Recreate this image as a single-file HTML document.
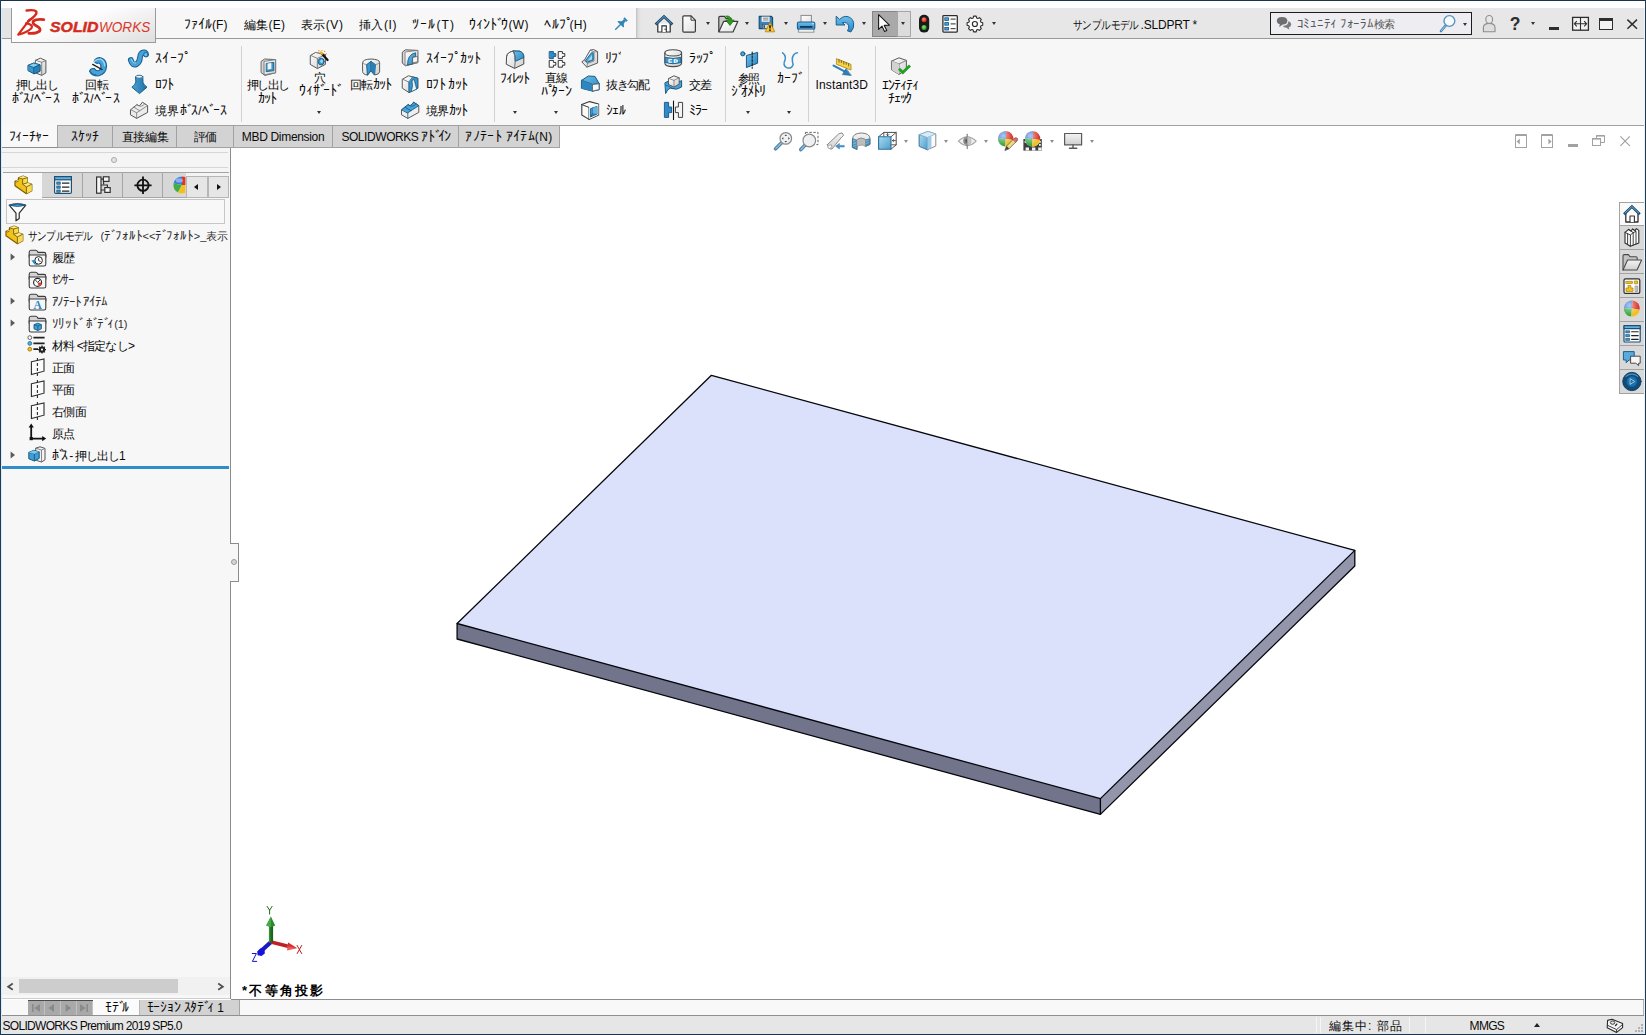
<!DOCTYPE html>
<html lang="ja">
<head>
<meta charset="utf-8">
<title>SOLIDWORKS Premium 2019 - サンプルモデル.SLDPRT</title>
<style>
*{box-sizing:border-box;margin:0;padding:0}
html,body{width:1646px;height:1035px;overflow:hidden;background:#fff}
body{position:relative;font-family:"Liberation Sans",sans-serif;font-size:12px;color:#000}
.a{position:absolute}
.t{position:absolute;white-space:nowrap;overflow:hidden;line-height:16px;height:16px;font-size:12px;color:#0a0a0a}
svg{position:absolute;overflow:visible}
#bt{left:0;top:0;width:1646px;height:1px;background:#1b3348}
#bl{left:0;top:0;width:1px;height:1035px;background:#1d3c55}
#br{left:1645px;top:0;width:1px;height:1035px;background:#1d3c55}
#bb{left:0;top:1034px;width:1646px;height:1px;background:#1b3348}
#bl2{left:1px;top:8px;width:1px;height:1026px;background:#dcebf6}
#br2{left:1644px;top:8px;width:1px;height:1026px;background:#eaf2f9}
#tsl{left:2px;top:8px;width:9px;height:30px;background:#e4e4e4}
#menu{left:156px;top:8px;width:480px;height:30px;background:#f7f7f7}
#tsr{left:636px;top:8px;width:1008px;height:30px;background:linear-gradient(90deg,#bdbdbd 0,#dcdcdc 2px,#e7e7e7 5px,#e7e7e7 100%)}
#tline{left:2px;top:38px;width:1642px;height:1px;background:#999}
#logo{left:11px;top:8px;width:145px;height:35px;border:1px solid #9a9a9a;border-top:none;background:linear-gradient(160deg,#ffffff 0%,#fdfdfd 40%,#ececec 75%,#dedede 100%)}
#ribbon{left:2px;top:39px;width:1642px;height:86px;background:#f7f7f7}
#rline{left:2px;top:125px;width:1642px;height:1px;background:#a0a0a0}
.sep{position:absolute;top:46px;width:1px;height:76px;background:#d2d2d2}
#vp{left:231px;top:126px;width:1413px;height:873px;background:#fff}
#vpb{left:231px;top:999px;width:1413px;height:1px;background:#8c8c8c}
.ct{position:absolute;top:126px;height:22px;background:#d3d3d3;border-right:1px solid #a2a2a2;border-bottom:1px solid #a2a2a2}
#lp{left:2px;top:148px;width:228px;height:851px;background:#f7f7f7}
#lpb{left:230px;top:148px;width:1px;height:851px;background:#8c8c8c}
#lptop{left:2px;top:147px;width:229px;height:1px;background:#8e8e8e}
#btabs{left:2px;top:1000px;width:1642px;height:15px;background:#f8f8f8}
#sline{left:2px;top:1015px;width:1642px;height:1px;background:#909090}
#status{left:2px;top:1016px;width:1642px;height:18px;background:#e6e6e6}
.dd{position:absolute;width:0;height:0;margin-left:0.5px;border-left:2.5px solid transparent;border-right:2.5px solid transparent;border-top:3px solid #333}
.mt{top:173px;height:25px;background:#d7d7d7;border-right:1px solid #a6a6a6;border-bottom:1px solid #a6a6a6}
.dg{border-top-color:#8c8c8c}
.tp{left:1620px;width:25px;height:1px;background:#a2a2a2}
.t b{font-weight:inherit;font-size:1.14em;line-height:1px}.t i{font-style:inherit;margin-right:-0.27em}
</style>
</head>
<body>
<div class="a" id="tsl"></div>
<div class="a" id="menu"></div>
<div class="a" id="tsr"></div>
<div class="a" id="tline"></div>
<div class="a" id="ribbon"></div>
<div class="a" id="rline"></div>
<div class="a" id="vp"></div>
<div class="a" id="lp"></div>
<div class="a" id="lpb"></div>
<div class="a" id="lptop"></div>
<div class="a" id="vpb"></div>
<div class="a" id="btabs"></div>
<div class="a" id="sline"></div>
<div class="a" id="status"></div>
<div class="a" id="logo"></div>
<!-- ===== title bar: logo ===== -->
<svg style="left:0;top:0" width="160" height="44" viewBox="0 0 160 44">
<g fill="none" stroke="#d52b1e" stroke-linecap="round" stroke-linejoin="round">
<path d="M26.6 10.6 Q34.6 9.2 36.4 11.8 Q37.4 14.6 28.2 21.2" stroke-width="2.5"/>
<path d="M29.6 19.6 L18.2 34.6 Q27 32.6 31.4 28.2 Q33.6 24.4 26 23.4" stroke-width="2.2"/>
<path d="M43.8 19.6 Q36.4 18.8 33.4 21 Q31.6 23.4 36.6 26 Q41.4 28.4 39.6 31.2 Q36.4 33.8 28.8 33.4" stroke-width="2.8"/>
</g>
</svg>
<div class="t" style="left:49.6px;top:17.8px;height:18px;line-height:18px;font-size:14.6px;font-weight:bold;font-style:italic;color:#d52b1e;letter-spacing:0;transform:scaleX(1.085);transform-origin:0 0;overflow:visible;-webkit-text-stroke:0.45px #d52b1e">SOLID</div>
<div class="t" style="left:98.6px;top:17.8px;height:18px;line-height:18px;font-size:14.6px;font-style:italic;color:#d9382b;letter-spacing:0;transform:scaleX(0.93);transform-origin:0 0;overflow:visible">WORKS</div>
<!-- pin -->
<svg style="left:613px;top:16px" width="16" height="16" viewBox="613 16 16 16">
<g transform="translate(620.7 24.3) rotate(45) scale(0.94)" fill="#2d86b6">
<rect x="-2.4" y="-8.2" width="4.8" height="1.8"/><rect x="-1.5" y="-6.6" width="3" height="4.2"/>
<path d="M-1.5 -3 L-4.4 -0.6 L-4.4 0.4 L4.4 0.4 L4.4 -0.6 L1.5 -3Z"/>
<rect x="-0.7" y="0" width="1.4" height="8.2"/>
</g></svg>
<!-- ===== quick access toolbar ===== -->
<svg style="left:650px;top:8px" width="350" height="30" viewBox="650 8 350 30">
<defs>
<linearGradient id="gdoc" x1="0" y1="0" x2="1" y2="1"><stop offset="0" stop-color="#ffffff"/><stop offset="1" stop-color="#e2e2e2"/></linearGradient>
<linearGradient id="gpr" x1="0" y1="0" x2="0" y2="1"><stop offset="0" stop-color="#6cc0ee"/><stop offset="1" stop-color="#2a86c6"/></linearGradient>
<radialGradient id="gred" cx="0.4" cy="0.35" r="0.7"><stop offset="0" stop-color="#ff8a7a"/><stop offset="1" stop-color="#d01a10"/></radialGradient>
<radialGradient id="ggrn" cx="0.4" cy="0.35" r="0.7"><stop offset="0" stop-color="#8ae070"/><stop offset="1" stop-color="#1c9418"/></radialGradient>
</defs>
<!-- home -->
<path d="M657.8 23.6 V32 H670.2 V23.6" fill="#fff" stroke="#2a2a2a" stroke-width="1.2"/>
<path d="M661.9 32 V25.9 H666.3 V32" fill="#fff" stroke="#2a2a2a" stroke-width="1.1"/><rect x="664.6" y="28.6" width="1" height="1.4" fill="#2a2a2a"/>
<path d="M655.6 24.6 L664 16.6 L672.4 24.6" fill="none" stroke="#1b4668" stroke-width="2.8" stroke-linejoin="miter" stroke-linecap="butt"/>
<path d="M656.4 23.8 L664 16.5 L671.6 23.8" fill="none" stroke="#6fb8e8" stroke-width="0.9" stroke-linejoin="miter" stroke-linecap="butt"/>
<!-- new doc -->
<path d="M684 15.8 H691 L695.4 20.2 V31 Q695.4 32.2 694.2 32.2 H684 Q682.8 32.2 682.8 31 V17 Q682.8 15.8 684 15.8Z" fill="url(#gdoc)" stroke="#3a3a3a" stroke-width="1.2"/>
<path d="M691 15.8 V20.2 H695.4" fill="none" stroke="#3a3a3a" stroke-width="1"/>
<!-- open -->
<path d="M718.8 32 V17.6 Q718.8 16.4 720 16.4 H724.6 L726 18.4 H731 V21" fill="#c9c9c9" stroke="#3a3a3a" stroke-width="1.2" stroke-linejoin="round"/>
<path d="M718.8 32 L723.6 21.4 H737.8 L733 32Z" fill="url(#gdoc)" stroke="#3a3a3a" stroke-width="1.2" stroke-linejoin="round"/>
<path d="M725.8 16 Q730.6 15.4 731.4 20 L734.2 20 L730 25.4 L725.6 20 L728.4 20 Q728.2 17.6 725.8 16Z" fill="#2f9a1e" stroke="#1c6c10" stroke-width="0.7"/>
<!-- save -->
<path d="M759.2 16.4 H771.4 L772.6 17.6 V28.6 H759.2Z" fill="#3a7fb6" stroke="#164a74" stroke-width="1.1" stroke-linejoin="round"/>
<rect x="761.6" y="16.6" width="8" height="5.2" fill="#f2f2f2"/><path d="M763 18.2H768.4M763 20H768.4" stroke="#555" stroke-width="0.7"/>
<rect x="762.4" y="24.4" width="6.4" height="4.2" fill="#d8d8d8" stroke="#164a74" stroke-width="0.6"/><rect x="763.4" y="25.2" width="1.6" height="2.6" fill="#444"/>
<path d="M770 22.4 L774.8 31.8 H765.2Z" fill="#f8c83a" stroke="#c08a10" stroke-width="0.9" stroke-linejoin="round"/>
<path d="M770 25.2 V28.6" stroke="#111" stroke-width="1.5"/><circle cx="770" cy="30.2" r="0.85" fill="#111"/>
<!-- print -->
<rect x="801" y="15.4" width="10.4" height="8" fill="url(#gdoc)" stroke="#8a8a8a" stroke-width="1"/>
<rect x="797.4" y="22" width="17.4" height="7.6" rx="1.6" fill="url(#gpr)" stroke="#1c5e8e" stroke-width="1.1"/>
<rect x="800" y="26" width="12.4" height="1.8" fill="#123a5a"/>
<path d="M799 29.6 H813.4 L814.2 32.2 H798.2Z" fill="#fbfbfb" stroke="#8a8a8a" stroke-width="0.9"/>
<circle cx="813" cy="23.8" r="0.7" fill="#fff"/>
<!-- undo -->
<path d="M836.2 16.2 L836.2 25 L845 25 L842.4 22.6 Q847.2 21.8 848.6 25.6 Q849.4 28.6 847.4 30.8 L850.8 32 Q854.8 27.6 853.6 22.4 Q851.6 16.2 845.2 16.4 Q842 16.8 839.6 19.4Z" fill="url(#gpr)" stroke="#1c5e8e" stroke-width="1" stroke-linejoin="round"/>
<!-- select (pressed) -->
<rect x="872.5" y="11.5" width="25" height="25" fill="#a9a9a9" stroke="#868686" stroke-width="1"/>
<rect x="897.5" y="11.5" width="13" height="25" fill="#dcdcdc" stroke="#a6a6a6" stroke-width="1"/>
<path d="M878.6 14.6 V29.4 L882 26.2 L884.6 31.6 L886.8 30.6 L884.2 25.4 L889.4 25.2Z" fill="#fff" stroke="#1a1a1a" stroke-width="1.1" stroke-linejoin="round"/>
<!-- traffic light -->
<rect x="919" y="14.8" width="10.2" height="17.8" rx="5" fill="#1a1a1a"/>
<circle cx="924.1" cy="19.8" r="2.5" fill="url(#gred)"/>
<circle cx="924.1" cy="27.6" r="2.5" fill="url(#ggrn)"/>
<!-- options list -->
<rect x="942.9" y="15.7" width="14.4" height="16.4" rx="0.8" fill="#fdfdfd" stroke="#2c2c2c" stroke-width="1.3"/>
<g fill="#4aa6dc" stroke="#15527c" stroke-width="0.8"><rect x="944.8" y="17.8" width="3.8" height="2.6"/><rect x="944.8" y="22.6" width="3.8" height="2.6"/><rect x="944.8" y="27.4" width="3.8" height="2.6"/></g>
<path d="M950.6 19.1H955.6M950.6 23.9H955.6M950.6 28.7H955.6" stroke="#2c2c2c" stroke-width="1"/>
<!-- gear -->
<path d="M973.4 16.2 h3 l0.5 2 l1.5 0.7 l1.8 -1 l2.1 2.1 l-1 1.8 l0.7 1.5 l2 0.5 v3 l-2 0.5 l-0.7 1.5 l1 1.8 l-2.1 2.1 l-1.8 -1 l-1.5 0.7 l-0.5 2 h-3 l-0.5 -2 l-1.5 -0.7 l-1.8 1 l-2.1 -2.1 l1 -1.8 l-0.7 -1.5 l-2 -0.5 v-3 l2 -0.5 l0.7 -1.5 l-1 -1.8 l2.1 -2.1 l1.8 1 l1.5 -0.7Z" transform="translate(974.9 24) scale(0.86) translate(-974.9 -25.3)" fill="#fbfbfb" stroke="#2c2c2c" stroke-width="1.3" stroke-linejoin="round"/>
<circle cx="974.9" cy="24" r="2.5" fill="#fff" stroke="#2c2c2c" stroke-width="1.2"/>
</svg>
<div class="dd" style="left:705.6px;top:22px"></div>
<div class="dd" style="left:744.4px;top:22px"></div>
<div class="dd" style="left:783.6px;top:22px"></div>
<div class="dd" style="left:822.5px;top:22px"></div>
<div class="dd" style="left:861.6px;top:22px"></div>
<div class="dd" style="left:900.5px;top:22px"></div>
<div class="dd" style="left:991.5px;top:22px"></div>
<!-- ===== search box + window controls ===== -->
<div class="a" style="left:1270px;top:12px;width:202px;height:23px;background:#eeeef2;border:1px solid #1c1c1c"></div>
<svg style="left:1276px;top:16px" width="16" height="15" viewBox="0 0 16 15">
<path d="M6 1 Q11.4 1 11.4 4.8 Q11.4 8.4 6.8 8.6 L3.2 11 L3.8 8.2 Q0.8 7.4 0.8 4.8 Q0.8 1 6 1Z" fill="#6e6e6e"/>
<path d="M12.4 5.2 Q15.2 5.8 15.2 8.6 Q15.2 10.8 12.8 11.4 L13.4 13.8 L10.4 11.8 Q7.6 11.8 6.8 10 Q12.2 9.6 12.4 5.2Z" fill="#7c7c7c"/>
</svg>
<svg style="left:1439px;top:14px" width="18" height="19" viewBox="0 0 18 19">
<path d="M6.6 11.6 L2 17" stroke="#4d86b4" stroke-width="2.6" stroke-linecap="round"/>
<path d="M6.6 11.6 L2.4 16.6" stroke="#a8cce8" stroke-width="1" stroke-linecap="round"/>
<circle cx="10.4" cy="7" r="5.4" fill="#f6fafd" stroke="#5a92c0" stroke-width="1.4"/>
</svg>
<div class="dd" style="left:1462.4px;top:23px"></div>
<svg style="left:1482px;top:14px" width="15" height="19" viewBox="0 0 15 19">
<path d="M1.4 17.8 V13.6 Q1.4 9.4 7.2 9.4 Q13 9.4 13 13.6 V17.8Z" fill="#dedede" stroke="#8c8c8c" stroke-width="1.1" stroke-linejoin="round"/>
<ellipse cx="7.2" cy="5.4" rx="3.4" ry="3.9" fill="#e8e8e8" stroke="#8c8c8c" stroke-width="1.1"/>
</svg>
<div class="t" style="left:1509px;top:13px;width:12px;height:22px;line-height:22px;font-size:17.5px;font-weight:bold;color:#2e2e2e;text-align:center">?</div>
<div class="dd" style="left:1530.5px;top:22px"></div>
<div class="a" style="left:1549px;top:27px;width:10px;height:3px;background:#2e2e2e"></div>
<svg style="left:1571px;top:16px" width="19" height="16" viewBox="0 0 19 16">
<rect x="1.6" y="1.4" width="15.8" height="12.8" fill="#f2f2f2" stroke="#2e2e2e" stroke-width="1.3"/>
<path d="M9.5 1.4V14.2" stroke="#2e2e2e" stroke-width="1.1"/>
<path d="M3.4 7.8H15.6M5.8 5.2L3.4 7.8L5.8 10.4M13.2 5.2L15.6 7.8L13.2 10.4" stroke="#2e2e2e" stroke-width="1.1" fill="none"/>
</svg>
<div class="a" style="left:1599px;top:18px;width:14px;height:12px;border:1px solid #2e2e2e;border-top:3px solid #2e2e2e;background:#f2f2f2"></div>
<svg style="left:1626px;top:18px" width="13" height="13" viewBox="0 0 13 13"><path d="M1.4 1.6 L11 10.8 M11 1.6 L1.4 10.8" stroke="#2e2e2e" stroke-width="1.5"/></svg>

<!-- ===== ribbon (CommandManager) ===== -->
<div class="sep" style="left:241px"></div>
<div class="sep" style="left:494px"></div>
<div class="sep" style="left:725px"></div>
<div class="sep" style="left:808px"></div>
<div class="sep" style="left:875px"></div>
<svg style="left:0;top:40px" width="1000" height="85" viewBox="0 40 1000 85">
<defs>
<linearGradient id="gw" x1="0" y1="0" x2="1" y2="1"><stop offset="0" stop-color="#ffffff"/><stop offset="1" stop-color="#cfcfcf"/></linearGradient>
<linearGradient id="gb" x1="0" y1="0" x2="1" y2="1"><stop offset="0" stop-color="#6fbfea"/><stop offset="1" stop-color="#2b84bd"/></linearGradient>
<linearGradient id="gb2" x1="0" y1="0" x2="1" y2="0"><stop offset="0" stop-color="#4aa4da"/><stop offset="1" stop-color="#1f6f9f"/></linearGradient>
</defs>
<g stroke-linejoin="round" stroke-linecap="round">
<!-- extrude boss/base (28,58) -->
<g transform="translate(28 58)">
<path d="M7.7 2.2 L12.4 0.2 L17.9 2.6 L17.9 14.9 L13.7 17.4 L7.7 14.9Z" fill="url(#gw)" stroke="#5a5a5a" stroke-width="1"/>
<path d="M7.7 2.2 L13.7 4.3 L17.9 2.6 M13.7 4.3 V17.4" fill="none" stroke="#7a7a7a" stroke-width="0.9"/>
<path d="M0.3 7.3 L5.6 5.1 L12 6.8 L12 13.2 L6 15.8 L0.3 12.8Z" fill="#3a96cc" stroke="#145a84" stroke-width="1"/>
<path d="M0.3 7.3 L5.6 5.1 L12 6.8 L6 9.4Z" fill="#86cdf0" stroke="#145a84" stroke-width="0.8"/>
<path d="M6 9.4 L12 6.8 L12 13.2 L6 15.8Z" fill="#2a80b6" stroke="#145a84" stroke-width="0.8"/>
</g>
<!-- revolve boss/base (88,56) -->
<g transform="translate(88 56)">
<path d="M6.2 5.4 Q7 2.2 11.4 1.6 Q18.4 2.4 18.6 10 Q18.2 18.4 10 20 Q3.4 19.6 1.6 15.2 Q2.6 11.8 6.4 12.6 Q8.4 15.6 11.2 14.4 Q13.6 12.4 12.8 9.2 Q11.4 6.2 9.2 7.4 Q7.6 7.2 6.2 5.4Z" fill="#48a2d8" stroke="#1b6292" stroke-width="1.1"/>
<path d="M6.6 5.2 Q9 2.6 12.6 3.2 Q16.6 5 16.6 9.6" fill="none" stroke="#9ad6f4" stroke-width="1.4"/>
<path d="M1.8 15 Q3.8 18.6 8 18.8" fill="none" stroke="#1f6f9f" stroke-width="1.2"/>
<path d="M4.7 8.4 L14 13.5" stroke="#1a1a1a" stroke-width="1.3"/>
</g>
<!-- sweep (129,49) -->
<path d="M130.8 60 Q132.4 65.8 136.4 64.2 Q139.6 62.4 140 57.4 Q140.6 52 144 52.4 Q145.8 52.8 146 54.4" fill="none" stroke="#1b6292" stroke-width="5.8"/>
<path d="M130.8 60 Q132.4 65.8 136.4 64.2 Q139.6 62.4 140 57.4 Q140.6 52 144 52.4 Q145.8 52.8 146 54.4" fill="none" stroke="#48a2d8" stroke-width="3.8"/>
<path d="M131.4 59.4 Q132.6 63.6 135.6 63" fill="none" stroke="#9ad6f4" stroke-width="1"/>
<circle cx="145.9" cy="54.6" r="2.2" fill="#6dbbe6" stroke="#1b6292" stroke-width="0.9"/>
<!-- loft (131,75) -->
<path d="M135.8 76.6 Q139.3 74.2 142.8 76.6 L143 82.4 Q143.6 85 147 87.2 L139.5 93.6 L131.9 87.2 Q135.2 85 135.8 82.4Z" fill="url(#gb2)" stroke="#1b5f8e" stroke-width="1"/>
<ellipse cx="139.3" cy="76.7" rx="3.5" ry="1.5" fill="#f4f4f4" stroke="#1b5f8e" stroke-width="0.8"/>
<!-- boundary boss (130,101) -->
<path d="M130.8 109.6 L137 104.6 Q139.4 107.4 142.4 102.2 L147.6 105.6 L147.6 112.4 L136.6 118.4 L130.8 115Z" fill="#ececec" stroke="#555" stroke-width="1"/>
<path d="M130.8 109.6 L136.6 112.8 L147.6 105.6 M136.6 112.8 V118.4 M133.8 107.2 L139.6 110.6 M137 104.6 Q141 108.6 144.8 103.8" fill="none" stroke="#777" stroke-width="0.8"/>
<!-- extrude cut (261,58) -->
<g transform="translate(261 58)">
<path d="M0.4 3.2 L3.6 1 L14.6 1.6 L14.6 14.8 L4 17.4 L0.4 14.8Z" fill="#d4d4d4" stroke="#666" stroke-width="1"/>
<path d="M3.4 3.4 L14.6 1.6 L14.6 14.8 L3.4 16.8Z" fill="url(#gw)" stroke="#777" stroke-width="0.9"/>
<path d="M5.6 5.4 L12.8 4.4 L12.8 12.6 L5.6 13.6Z" fill="#3a96cc" stroke="#145a84" stroke-width="0.9"/>
<path d="M6.6 5.6 L10.4 5.1 L10.4 11 L6.6 11.6Z" fill="#eef6fb"/>
</g>
<!-- hole wizard (310,50) -->
<g transform="translate(310 50)">
<path d="M0.6 5.4 L5.6 2.4 L15.4 4.6 L15.4 14.4 L7.4 18.6 L0.6 14.6Z" fill="url(#gw)" stroke="#5a5a5a" stroke-width="1"/>
<path d="M0.6 5.4 L7.4 8.4 L15.4 4.6 M7.4 8.4 V18.6" fill="none" stroke="#777" stroke-width="0.9"/>
<ellipse cx="11.2" cy="11.6" rx="3" ry="3.4" fill="#3a96cc" stroke="#145a84" stroke-width="0.9"/>
<ellipse cx="11.6" cy="11.2" rx="1.4" ry="1.7" fill="#9ad6f4"/>
<path d="M11.4 3.2 L17.6 10" stroke="#111" stroke-width="2.2"/>
<path d="M10.6 2.4 L12 3.8" stroke="#f0b820" stroke-width="2.2"/>
<g fill="#f08a18"><circle cx="6.8" cy="2.6" r="0.7"/><circle cx="8.8" cy="0.8" r="0.7"/><circle cx="14.6" cy="1.4" r="0.7"/><circle cx="16.4" cy="3.8" r="0.6"/><circle cx="12" cy="0.6" r="0.6"/></g>
</g>
<!-- revolve cut (362,58) -->
<g transform="translate(362 58)">
<path d="M0.6 4.4 Q0.6 1.4 9 1 Q17.6 1.4 17.6 4.4 L17.6 13.8 Q17.6 16.4 12.6 17 L9 13 L5.4 17 Q0.6 16.4 0.6 13.8Z" fill="url(#gw)" stroke="#5a5a5a" stroke-width="1"/>
<path d="M5.4 17 L4.6 6.6 L9 3.4 L13.4 6.6 L12.6 17 L9 13Z" fill="#3a96cc" stroke="#145a84" stroke-width="0.9"/>
<path d="M9 3.4 V13" stroke="#145a84" stroke-width="0.9"/>
<path d="M9 3.4 L13.4 6.6 L12.6 17 L9 13Z" fill="#2a80b6"/>
<path d="M0.6 4.4 Q2 6.6 4.6 6.6 M17.6 4.4 Q16 6.6 13.4 6.6" fill="none" stroke="#777" stroke-width="0.8"/>
</g>
<!-- sweep cut (402,49) -->
<g transform="translate(402 49)">
<path d="M0.6 3 L3.4 0.8 L15.8 1.4 L15.8 13.6 L3.6 16.8 L0.6 14.4Z" fill="#d8d8d8" stroke="#5a5a5a" stroke-width="1"/>
<path d="M3.4 3 L15.8 1.4 L15.8 13.6 L3.4 16.4Z" fill="url(#gw)" stroke="#777" stroke-width="0.8"/>
<path d="M5.6 15.6 Q5.4 5.4 13.6 3.8 L13.6 7.6 L10.8 8.2 L10.8 14.4Z" fill="url(#gb)" stroke="#145a84" stroke-width="0.9"/>
<path d="M11 8.4 L15.6 7.4 L15.6 12.8 L11 13.8Z" fill="#f4f4f4" stroke="#666" stroke-width="0.8"/>
</g>
<!-- loft cut (402,75) -->
<g transform="translate(402 75)">
<path d="M0.6 4.2 L6.4 0.8 L15.8 3.2 L15.8 13.2 L7 17.6 L0.6 13.4Z" fill="url(#gw)" stroke="#5a5a5a" stroke-width="1"/>
<path d="M0.6 4.2 L7 7.2 V17.6" fill="none" stroke="#777" stroke-width="0.9"/>
<path d="M7 7.2 L7 17.6 L9.4 16.4 Q11.4 11 10 5.6 L12.2 4.6 Q13.2 9.6 14.6 13.8 L15.8 13.2 L15.8 3.2 L11 2Z" fill="#3a96cc" stroke="#145a84" stroke-width="0.8"/>
<path d="M9.4 16.4 Q11.4 11 10 5.6 L12.2 4.6 Q13.2 9.6 14.6 13.8Z" fill="#eaf4fa" stroke="#145a84" stroke-width="0.7"/>
</g>
<!-- boundary cut (401,101) -->
<g transform="translate(401 101)">
<path d="M0.8 8.6 L7.2 3.6 Q9.6 6.2 12.6 1.2 L17.8 4.6 L17.8 11.4 L6.8 17.4 L0.8 14Z" fill="#eeeeee" stroke="#5a5a5a" stroke-width="1"/>
<path d="M0.8 8.6 L7.2 3.6 Q9.6 6.2 12.6 1.2 L17.8 4.6 L6.8 11.8Z" fill="#48a2d8" stroke="#145a84" stroke-width="0.9"/>
<path d="M3.8 6.2 L9.8 9.6 M7.2 3.6 Q11.2 7.6 15 2.8 M6.8 11.8 V17.4" fill="none" stroke="#145a84" stroke-width="0.8"/>
</g>
<!-- fillet (506,50) -->
<g transform="translate(506 50)">
<path d="M0.6 6.4 Q1 2.2 7.4 1 L14 1.2 Q18 3 17.8 7.6 L17.8 14 L8.6 18.4 L0.6 14.4Z" fill="url(#gw)" stroke="#4a4a4a" stroke-width="1"/>
<path d="M7.4 1 L14 1.2 Q18 3 17.8 7.6 L9.2 11.4 Q9.6 5.4 7.4 1Z" fill="url(#gb)" stroke="#145a84" stroke-width="0.9"/>
<path d="M0.6 6.4 Q1 2.2 7.4 1 Q9.6 5.4 9.2 11.4 L8.6 18.4" fill="none" stroke="#666" stroke-width="0.9"/>
</g>
<!-- linear pattern (549,51) -->
<g transform="translate(549 51)" stroke-width="1">
<path d="M0.6 0.6 H4.4 V2.6 H6.8 V5.4 H4.4 V7.4 H0.6Z" fill="#2f8bcb" stroke="#1b5f8e"/>
<path d="M9.6 0.6 H13.4 V2.6 H15.8 V5.4 H13.4 V7.4 H9.6Z" fill="#fbfbfb" stroke="#333"/>
<path d="M0.6 9.4 H4.4 V11.4 H6.8 V14.2 H4.4 V16.2 H0.6Z" fill="#fbfbfb" stroke="#333"/>
<path d="M9.6 9.4 H13.4 V11.4 H15.8 V14.2 H13.4 V16.2 H9.6Z" fill="#fbfbfb" stroke="#333"/>
</g>
<!-- rib (581,49) -->
<g transform="translate(581 49)">
<path d="M9.6 1 L12.8 0.6 L16.6 2.6 L16.6 14 L5.8 18.2 L0.8 12.8 L3 11.4Z" fill="url(#gw)" stroke="#5a5a5a" stroke-width="1"/>
<path d="M3 11.4 L6.6 14.4 L13 12 L13 3 L9.6 1 M13 3 L16.6 2.6 M6.6 14.4 L5.8 18.2" fill="none" stroke="#777" stroke-width="0.8"/>
<path d="M4.6 11.4 L10.8 3.4 L12.2 4.2 L12.2 11 L7 13.2Z" fill="#48a2d8" stroke="#145a84" stroke-width="0.9"/>
<path d="M6.8 11.6 L11 6 L11 10.4Z" fill="#a6daf4"/>
</g>
<!-- draft (581,75) -->
<g transform="translate(581 75)">
<path d="M0.8 5.2 L7.4 1 L14 1.4 L18.2 8.6 L18.2 14.8 L11.6 16.2 L0.8 13.4Z" fill="url(#gb)" stroke="#145a84" stroke-width="1"/>
<path d="M0.8 5.2 L11.6 9.4 L18.2 8.6 M11.6 9.4 V16.2" fill="none" stroke="#145a84" stroke-width="0.9"/>
<path d="M0.8 5.2 L11.6 9.4 L11.6 16.2 L0.8 13.4Z" fill="#2f86be"/>
<path d="M11.8 9.6 L18 8.8 L18 14.6 L11.8 16Z" fill="#f6f6f6" stroke="#666" stroke-width="0.8"/>
</g>
<!-- shell (581,101) -->
<g transform="translate(581 101)">
<path d="M0.8 3.6 L8.6 0.6 L17.6 3 L17.6 14 L8 18.4 L0.8 14Z" fill="#fcfcfc" stroke="#3a3a3a" stroke-width="1.1"/>
<path d="M0.8 3.6 L8 6.4 V18.4" fill="none" stroke="#3a3a3a" stroke-width="1"/>
<path d="M8.2 6.4 L17.4 3.2 L17.4 13.8 L8.2 18Z" fill="#fcfcfc"/>
<path d="M9.8 7.6 L16 5.4 L16 13 L9.8 15.8Z" fill="#3a96cc" stroke="#145a84" stroke-width="0.9"/>
<path d="M11.6 7 L11.6 12.6 L16 13 M11.6 12.6 L9.8 15.8" fill="none" stroke="#145a84" stroke-width="0.8"/>
<path d="M11.6 7 L16 5.4 L16 13 L11.6 12.6Z" fill="#62b4e2"/>
</g>
<!-- wrap (664,49) -->
<g transform="translate(664 49)">
<path d="M0.8 4 Q0.8 0.8 9 0.8 Q17.6 0.8 17.6 4 L17.6 14 Q17.6 17.6 9 17.6 Q0.8 17.6 0.8 14Z" fill="url(#gw)" stroke="#4a4a4a" stroke-width="1.1"/>
<path d="M0.8 4 Q0.8 7 9 7 Q17.6 7 17.6 4" fill="none" stroke="#4a4a4a" stroke-width="1"/>
<path d="M1.6 8.4 Q9 10.6 16.8 8.4 L16.8 13.6 Q9 16 1.6 13.6Z" fill="#3a96cc" stroke="#145a84" stroke-width="0.9"/>
<path d="M7.6 10.6 H5 V13.2 H7.6 M10.4 10.6 V13.4 Q13.4 13.2 13.4 12 Q13.4 10.6 10.4 10.6Z" fill="none" stroke="#eaf6fc" stroke-width="1.3"/>
</g>
<!-- intersect (664,75) -->
<g transform="translate(664 75)">
<path d="M1.2 7.6 Q4.4 5 8.2 7.4 Q12.4 9.4 17.6 5.6 L17.6 12 Q12.4 15.6 8 13.4 Q4.8 12 1.8 18.2Z" fill="#48a2d8" stroke="#145a84" stroke-width="1"/>
<path d="M4.8 3.4 L10 0.8 L15.2 2.8 L15.2 9.2 L10 12 L4.8 9.6Z" fill="url(#gw)" stroke="#5a5a5a" stroke-width="1"/>
<path d="M4.8 3.4 L10 5.4 L15.2 2.8 M10 5.4 V12" fill="none" stroke="#777" stroke-width="0.8"/>
<path d="M1.4 10 Q5 10.8 8 13.4" fill="none" stroke="#145a84" stroke-width="0.8"/>
</g>
<!-- mirror (664,101) -->
<g transform="translate(664 101)">
<path d="M0.8 1.4 H4.6 V6 H7.6 V11.6 H4.6 V16.4 H0.8Z" fill="#2f8bcb" stroke="#1b5f8e" stroke-width="1"/>
<path d="M18.2 1.4 H14.4 V6 H11.4 V11.6 H14.4 V16.4 H18.2Z" fill="#f4f4f4" stroke="#444" stroke-width="1"/>
<path d="M9.5 0 V18.4" stroke="#111" stroke-width="1.1"/>
</g>
<!-- ref geometry (740,51) -->
<g transform="translate(740 51)">
<path d="M6.8 4.4 L17.6 1.4 L17.6 12.2 L6.8 16.4Z" fill="url(#gb)" stroke="#145a84" stroke-width="1"/>
<path d="M12.2 1 V17.4" stroke="#111" stroke-width="1" stroke-dasharray="2.4 1.4"/>
<circle cx="2.8" cy="2.8" r="2.1" fill="#48a2d8" stroke="#145a84" stroke-width="1"/>
</g>
<!-- curves (780,51) -->
<path d="M782.6 52.8 Q786.4 55.6 785 60.2 Q782.4 65.4 786.6 67.6 Q791.6 69.4 793.2 64.6 Q791.2 58.4 793.6 55 Q795.2 53 797.4 52.8" fill="none" stroke="#3a8fc4" stroke-width="1.5"/>
<!-- instant3D (833,58) -->
<g transform="translate(833 58)">
<path d="M3.8 0.8 L18 6.4 L18 12 L3.8 6.4Z" fill="#f4d24a" stroke="#a8820c" stroke-width="0.8"/>
<path d="M6 1.8 V4.2 M8.4 2.8 V4.6 M10.8 3.6 V6 M13.2 4.6 V6.4 M15.6 5.6 V8" stroke="#6a5208" stroke-width="0.8"/>
<path d="M0.6 7.6 L12 13.6" stroke="#2f7fb8" stroke-width="2.2"/>
<path d="M18 17.4 L9.4 16.6 L13 10.8Z" fill="#2f7fb8" stroke="#1b5f8e" stroke-width="0.6"/>
</g>
<!-- entity check (891,57) -->
<g transform="translate(891 57)">
<path d="M0.8 4 L8 0.8 L15.4 3.4 L15.4 12.6 L8 17.4 L0.8 13Z" fill="url(#gw)" stroke="#5a5a5a" stroke-width="1"/>
<path d="M0.8 4 L8 7 L15.4 3.4 M8 7 V17.4" fill="none" stroke="#777" stroke-width="0.9"/>
<path d="M0.8 4 L8 7 V17.4 L0.8 13Z" fill="#d2d2d2"/>
<path d="M8 11.8 L11.8 15.6 L19 8.4" fill="none" stroke="#22a022" stroke-width="2.8" stroke-linecap="butt" stroke-linejoin="miter"/>
</g>
</g>
</svg>
<div class="dd" style="left:316.5px;top:111px"></div>
<div class="dd" style="left:512.5px;top:111px"></div>
<div class="dd" style="left:553.6px;top:111px"></div>
<div class="dd" style="left:745.4px;top:111px"></div>
<div class="dd" style="left:786.4px;top:111px"></div>

<!-- ===== command manager tabs ===== -->
<div class="a" style="left:2px;top:125px;width:56px;height:22px;background:#f8f8f8;border-right:1px solid #a2a2a2"></div>
<div class="ct" style="left:58px;width:55px"></div>
<div class="ct" style="left:113px;width:64px"></div>
<div class="ct" style="left:177px;width:57px"></div>
<div class="ct" style="left:234px;width:99px"></div>
<div class="ct" style="left:333px;width:126px"></div>
<div class="ct" style="left:459px;width:101px"></div>

<!-- ===== feature manager panel ===== -->
<svg width="0" height="0" style="left:0;top:0"><defs>
<symbol id="fold" viewBox="0 0 19 18" overflow="visible">
<path d="M1.2 3.2 Q1.2 1.2 3 1.2 L7.6 1.2 Q9 1.2 9.6 2.6 L10 3.4 L16 3.4 Q17.8 3.4 17.8 5.2 L17.8 8 L1.2 8Z" fill="#d4d4d4" stroke="#3c3c3c" stroke-width="1.1"/>
<path d="M1.2 6 L17.8 6 L17.8 15.2 Q17.8 17 16 17 L3 17 Q1.2 17 1.2 15.2Z" fill="#f6f6f6" stroke="#3c3c3c" stroke-width="1.1"/>
</symbol>
<symbol id="plane" viewBox="0 0 19 20" overflow="visible">
<path d="M3.4 4.7 L16 2 L16 14.2 L3.4 17.6Z" fill="#fbfbfb" stroke="#2c2c2c" stroke-width="1.1"/>
<path d="M9.4 1 L9.4 19" stroke="#2c2c2c" stroke-width="1.1" stroke-dasharray="3 2" fill="none"/>
</symbol>
<symbol id="tri" viewBox="0 0 6 8"><path d="M0.6 0.4 L5 4 L0.6 7.6Z" fill="#5a5a5a"/></symbol>
<symbol id="part" viewBox="0 0 19 20" overflow="visible">
<path d="M1 6.2 L4.5 4.85 L4.5 2.8 L9.1 1.06 L13.4 2.7 L13.4 7.8 L17.8 9.2 L17.8 15.7 L12.4 18.65 L1 10.8Z" fill="#f1c21a" stroke="#7d5e06" stroke-width="1.2" stroke-linejoin="round"/>
<path d="M4.5 2.8 L9.1 1.06 L13.4 2.7 L8.6 4Z" fill="#fbe98a"/>
<path d="M8.6 4 L13.4 2.7 L13.4 7.8 L8.6 9.2Z" fill="#f8dc50"/>
<path d="M8.6 9.2 L13.4 7.8 L17.8 9.2 L12.4 11.9Z" fill="#fbe98a"/>
<path d="M12.4 11.9 L17.8 9.2 L17.8 15.7 L12.4 18.65Z" fill="#f7db55"/>
<path d="M1 6.2 L2.3 7 L4.5 6.2 L4.5 4.85Z" fill="#fbe98a"/>
<path d="M4.5 2.8 L8.6 4 L13.4 2.7 M8.6 4 V9.2 L12.4 11.9 L17.8 9.2 M12.4 11.9 V18.65 M8.6 9.2 L13.4 7.8 M1 6.2 L2.3 7 L4.5 6.2" fill="none" stroke="#7d5e06" stroke-width="0.9" stroke-linejoin="round"/>
</symbol>
<symbol id="boss" viewBox="0 0 19 17" overflow="visible">
<path d="M7.6 2.2 L12 0.8 L17 2.4 L17 13.8 L13.6 16 L8.4 14.4Z" fill="#f4f4f4" stroke="#555" stroke-width="1" stroke-linejoin="round"/>
<path d="M13.4 4 L17 2.4 M13.4 4 L13.6 16 M13.4 4 L7.6 2.2" stroke="#777" stroke-width="0.9" fill="none"/>
<path d="M0.8 6.4 L5.6 4.4 L11.2 5.8 L11.2 12.4 L6.4 15 L0.8 12.8Z" fill="#3f9ed2" stroke="#145a84" stroke-width="1" stroke-linejoin="round"/>
<path d="M0.8 6.4 L6.4 8 L11.2 5.8 M6.4 8 L6.4 15" stroke="#145a84" stroke-width="0.9" fill="none"/>
<path d="M0.8 6.4 L5.6 4.4 L11.2 5.8 L6.4 8Z" fill="#7cc6ec"/>
</symbol>
</defs></svg>
<div class="a" style="left:2px;top:148px;width:228px;height:25px;background:#f5f5f5"></div>
<div class="a" style="left:2px;top:152px;width:226px;height:1px;background:#d6d6d6"></div>
<div class="a" style="left:2px;top:167px;width:226px;height:1px;background:#d6d6d6"></div>
<div class="a" style="left:111px;top:157px;width:6px;height:6px;border-radius:3px;border:1px solid #a8a8a8;background:#e4e4e4"></div>
<!-- manager tabs -->
<div class="a" style="left:3px;top:172px;width:226px;height:1px;background:#a4a4a4"></div>
<div class="a" style="left:3px;top:173px;width:39px;height:25px;background:#f9f9f9"></div>
<div class="a mt" style="left:42px;width:41px"></div>
<div class="a mt" style="left:83px;width:40px"></div>
<div class="a mt" style="left:123px;width:40px"></div>
<div class="a mt" style="left:163px;width:40px"></div>
<div class="a mt" style="left:203px;width:26px;border-right:none"></div>
<!-- tab icons -->
<svg style="left:14px;top:175px" width="19" height="20"><use href="#part" width="19" height="20"/></svg>
<svg style="left:53px;top:175px" width="20" height="20" viewBox="0 0 20 20">
<rect x="1.6" y="1.6" width="16.8" height="16.8" rx="1.2" fill="#fff" stroke="#1c4f74" stroke-width="1.2"/>
<rect x="1.6" y="1.6" width="16.8" height="3.2" fill="#62b0e0" stroke="#1c4f74" stroke-width="1.2"/>
<g fill="#3f9ed2" stroke="#1c4f74" stroke-width="0.8"><rect x="3.8" y="7" width="3.4" height="2.2"/><rect x="3.8" y="11" width="3.4" height="2.2"/><rect x="3.8" y="15" width="3.4" height="2.2"/></g>
<g stroke="#222" stroke-width="1.1"><path d="M9 8.1H16.4M9 12.1H16.4M9 16.1H16.4"/></g>
</svg>
<svg style="left:93px;top:175px" width="20" height="20" viewBox="0 0 20 20">
<g fill="none" stroke="#333" stroke-width="1.2">
<rect x="3.6" y="2" width="4.4" height="16.2" fill="#f6f6f6"/>
<rect x="10.4" y="1.8" width="5.6" height="4.6" fill="#f6f6f6"/>
<rect x="11.8" y="12.6" width="5.4" height="4.8" fill="#f6f6f6"/>
<path d="M8 4.2H10.4M8 10H14.4V12.6M8 15H11.8"/>
<path d="M10.6 6.4 V9.4" />
</g></svg>
<svg style="left:133px;top:175px" width="20" height="20" viewBox="0 0 20 20">
<circle cx="10" cy="10.3" r="5.6" fill="none" stroke="#111" stroke-width="1.8"/>
<path d="M10 1.6V19M1.4 10.3H18.6" stroke="#111" stroke-width="1.8"/>
</svg>
<svg style="left:172px;top:176px" width="15" height="18" viewBox="0 0 15 18">
<defs><clipPath id="cpb"><rect x="0" y="0" width="13.4" height="18"/></clipPath></defs>
<g clip-path="url(#cpb)">
<circle cx="10" cy="9" r="8.6" fill="#e8e8e8"/>
<path d="M10 9 L10 0.4 A8.6 8.6 0 0 0 1.5 7.6Z" fill="#3d7fd9"/>
<path d="M10 9 L10 0.4 A8.6 8.6 0 0 1 18.6 9Z" fill="#d8382c"/>
<path d="M10 9 L1.5 7.6 A8.6 8.6 0 0 0 6 16.6Z" fill="#3fae49"/>
<path d="M10 9 L6 16.6 A8.6 8.6 0 0 0 18.6 9Z" fill="#f0c020"/>
<ellipse cx="7.4" cy="4.4" rx="3.6" ry="2.2" fill="#fff" opacity="0.4"/>
</g></svg>
<!-- scroll buttons -->
<div class="a" style="left:186px;top:173px;width:43px;height:3px;background:#f3f3f3"></div>
<div class="a" style="left:186px;top:176px;width:21.5px;height:22px;background:#e6e6e6;border:1px solid #b6b6b6"></div>
<div class="a" style="left:208px;top:176px;width:21px;height:22px;background:#e6e6e6;border:1px solid #b6b6b6"></div>
<div class="a" style="left:194px;top:184px;width:0;height:0;border-top:3px solid transparent;border-bottom:3px solid transparent;border-right:4px solid #111"></div>
<div class="a" style="left:217px;top:184px;width:0;height:0;border-top:3px solid transparent;border-bottom:3px solid transparent;border-left:4px solid #111"></div>
<!-- filter box -->
<div class="a" style="left:6px;top:199px;width:219px;height:25px;background:#f8f8f8;border:1px solid #c6c6c6"></div>
<svg style="left:8px;top:203px" width="19" height="19" viewBox="0 0 19 19">
<path d="M1.2 2.2 Q9.5 -0.4 17.8 2.2 L11.2 10.2 L11.2 15.4 L8 17.8 L8 10.2Z" fill="#fdfdfd" stroke="#2a2a2a" stroke-width="1.2" stroke-linejoin="round"/>
<path d="M1.2 2.2 Q9.5 0 17.8 2.2 Q9.5 4.6 1.2 2.2Z" fill="#4aa6dc" stroke="#1c5c86" stroke-width="1"/>
</svg>
<!-- tree -->
<svg style="left:5.3px;top:225.2px" width="19" height="20"><use href="#part" width="19" height="20"/></svg>
<svg style="left:10px;top:253px" width="6" height="8"><use href="#tri" width="6" height="8"/></svg>
<svg style="left:10px;top:297px" width="6" height="8"><use href="#tri" width="6" height="8"/></svg>
<svg style="left:10px;top:319px" width="6" height="8"><use href="#tri" width="6" height="8"/></svg>
<svg style="left:10px;top:451px" width="6" height="8"><use href="#tri" width="6" height="8"/></svg>
<!-- folders -->
<svg style="left:27.5px;top:248.5px" width="19" height="18" viewBox="0 0 19 18"><use href="#fold" width="19" height="18"/>
<circle cx="10.6" cy="11.4" r="3.8" fill="#fff" stroke="#222" stroke-width="1"/><path d="M10.6 9.2V11.6L12.6 12.4" stroke="#222" stroke-width="0.9" fill="none"/>
<path d="M3.4 11.6 L6.2 14.4 L7.6 10.8Z" fill="#2c86c4"/><path d="M5.4 12.4 Q6.4 15.4 9.6 15.6" stroke="#2c86c4" stroke-width="1.4" fill="none"/></svg>
<svg style="left:27.5px;top:270.5px" width="19" height="18" viewBox="0 0 19 18"><use href="#fold" width="19" height="18"/>
<circle cx="9.6" cy="11.4" r="4" fill="#fff" stroke="#222" stroke-width="1.1"/><path d="M9.6 11.4 L13.6 11.4 A4 4 0 0 1 10.6 15.2Z" fill="#d8452c"/><path d="M9.6 11.4 L7.2 8.8M9.6 11.4 L12 9" stroke="#222" stroke-width="0.9"/></svg>
<svg style="left:27.5px;top:292.5px" width="19" height="18" viewBox="0 0 19 18"><use href="#fold" width="19" height="18"/>
<text x="9.6" y="16" font-family="Liberation Serif,serif" font-weight="bold" font-size="11.5" text-anchor="middle" fill="#2c86c4">A</text></svg>
<svg style="left:27.5px;top:314.5px" width="19" height="18" viewBox="0 0 19 18"><use href="#fold" width="19" height="18"/>
<path d="M6 9.6 L9.8 8.2 L13.4 9.6 L13.4 13.8 L9.8 15.6 L6 13.8Z" fill="#3f9ed2" stroke="#145a84" stroke-width="0.9"/><path d="M6 9.6 L9.8 11 L13.4 9.6 M9.8 11V15.6" stroke="#145a84" stroke-width="0.8" fill="none"/></svg>
<!-- material -->
<svg style="left:27px;top:335px" width="20" height="19" viewBox="0 0 20 19">
<circle cx="2.8" cy="2.6" r="1.9" fill="#fff" stroke="#555" stroke-width="0.9"/>
<circle cx="2.8" cy="8.4" r="1.9" fill="#56aee0" stroke="#2a6e98" stroke-width="0.9"/>
<circle cx="2.8" cy="14.2" r="1.9" fill="#f3bc1c" stroke="#a87c08" stroke-width="0.9"/>
<path d="M6.4 2.6H17.6M6.4 8.4H17.6M6.4 14.2H11" stroke="#222" stroke-width="1.7"/>
<circle cx="15" cy="14.6" r="3.2" fill="#222"/><circle cx="15" cy="14.6" r="1.1" fill="#f7f7f7"/>
<path d="M15 10.6V18.6M11 14.6H19M12.2 11.8L17.8 17.4M17.8 11.8L12.2 17.4" stroke="#222" stroke-width="1.3"/><circle cx="15" cy="14.6" r="1.1" fill="#f7f7f7"/>
</svg>
<!-- planes -->
<svg style="left:28px;top:357px" width="19" height="20"><use href="#plane" width="19" height="20"/></svg>
<svg style="left:28px;top:379px" width="19" height="20"><use href="#plane" width="19" height="20"/></svg>
<svg style="left:28px;top:401px" width="19" height="20"><use href="#plane" width="19" height="20"/></svg>
<!-- origin -->
<svg style="left:28px;top:423px" width="19" height="19" viewBox="0 0 19 19">
<path d="M3.2 3 V15.6 H15" stroke="#111" stroke-width="1.8" fill="none"/>
<path d="M3.2 0.6 L5.8 4.6 H0.6Z M18.2 15.6 L14.2 18.2 V13Z" fill="#111"/>
<rect x="1.6" y="14" width="3.2" height="3.2" fill="#111"/>
</svg>
<!-- boss extrude -->
<svg style="left:27.5px;top:446px" width="19" height="17"><use href="#boss" width="19" height="17"/></svg>
<!-- rollback bar -->
<div class="a" style="left:2px;top:466px;width:227px;height:3px;background:#2f8dc9"></div>
<!-- h scrollbar -->
<div class="a" style="left:2px;top:977px;width:228px;height:18px;background:#f1f1f1"></div>
<div class="a" style="left:19px;top:979px;width:159px;height:14px;background:#cdcdcd"></div>
<svg style="left:6px;top:982px" width="9" height="9" viewBox="0 0 9 9"><path d="M6.8 1.6 L2.2 4.7 L6.8 7.8" stroke="#505050" stroke-width="1.8" fill="none"/></svg>
<svg style="left:216px;top:982px" width="9" height="9" viewBox="0 0 9 9"><path d="M2.2 1.6 L6.8 4.7 L2.2 7.8" stroke="#505050" stroke-width="1.8" fill="none"/></svg>
<!-- splitter handle -->
<div class="a" style="left:230px;top:543px;width:9px;height:39px;background:#f7f7f7;border:1px solid #8c8c8c;border-left:none"></div>
<div class="a" style="left:231px;top:559px;width:6px;height:6px;border-radius:3px;border:1px solid #9a9a9a;background:#d6d6d6"></div>

<!-- ===== viewport: model ===== -->
<svg class="a" id="model" style="left:0;top:0" width="1646" height="1035" viewBox="0 0 1646 1035">
<defs>
<linearGradient id="gy" x1="0" x2="1" y1="0" y2="0"><stop offset="0" stop-color="#3f9a3f"/><stop offset="0.5" stop-color="#1f6f1f"/><stop offset="1" stop-color="#185c18"/></linearGradient>
</defs>
<polygon points="711.4,375.3 1354.8,550.4 1100.4,798.6 457.1,623.5" fill="#dce1fb"/>
<polygon points="457.1,623.5 1100.4,798.6 1100.4,814.4 457.1,639" fill="#71748a"/>
<polygon points="1100.4,798.6 1354.8,550.4 1354.8,566 1100.4,814.4" fill="#9396ab"/>
<g fill="none" stroke="#05060c" stroke-width="1.3" stroke-linejoin="round" stroke-linecap="round">
<polygon points="711.4,375.3 1354.8,550.4 1100.4,798.6 457.1,623.5"/>
<polyline points="457.1,623.5 457.1,639 1100.4,814.4 1354.8,566 1354.8,550.4"/>
<line x1="1100.4" y1="798.6" x2="1100.4" y2="814.4"/>
</g>
<!-- triad -->
<line x1="271" y1="942" x2="260" y2="952" stroke="#1a1ac4" stroke-width="4.2" stroke-linecap="butt"/>
<path d="M257.2 951.5 L260.5 948.3 L264.6 949.2 L264.8 953.5 L261.5 956 L257.6 955.2Z" fill="#1414d8"/>
<line x1="271" y1="942" x2="289" y2="946.4" stroke="#c02222" stroke-width="3.6"/>
<path d="M288 942.6 L297 948.2 L287 950.6Z" fill="#ee5a5a"/>
<path d="M288 942.6 L297 948.2 L288 946.4Z" fill="#d83030"/>
<rect x="268.9" y="924" width="4.2" height="18.5" fill="url(#gy)"/>
<path d="M266.2 925.5 L270.9 916.6 L275.2 925.5 L270.9 927.2Z" fill="#2c8a2c"/>
<path d="M266.2 925.5 L270.9 916.6 L270.9 927.2Z" fill="#49a849"/>
<g fill="none" stroke-width="1" stroke-linecap="square">
<path d="M267.2 906.5 L269.6 910.2 L272 906.5 M269.6 910.2 L269.6 914" stroke="#1a6e1a"/>
<path d="M297.2 945.6 L301.6 953.4 M301.6 945.6 L297.2 953.4" stroke="#c01818"/>
<path d="M252.4 953.5 L256.4 953.5 L252.4 961.4 L256.6 961.4" stroke="#1414c8"/>
</g>
</svg>

<!-- ===== heads-up view toolbar ===== -->
<svg style="left:770px;top:128px" width="330" height="26" viewBox="770 128 330 26">
<defs>
<linearGradient id="vb" x1="0" y1="0" x2="1" y2="1"><stop offset="0" stop-color="#a8daf2"/><stop offset="1" stop-color="#4f9cc8"/></linearGradient>
<linearGradient id="vg" x1="0" y1="0" x2="0" y2="1"><stop offset="0" stop-color="#f4f4f4"/><stop offset="1" stop-color="#cfcfcf"/></linearGradient>
<radialGradient id="hl" cx="0.35" cy="0.3" r="0.6"><stop offset="0" stop-color="#fff" stop-opacity="0.6"/><stop offset="1" stop-color="#fff" stop-opacity="0"/></radialGradient>
<g id="ball">
<circle cx="0" cy="0" r="7.7" fill="#e8e8e8"/>
<path d="M0 0 L0.6 -7.7 A7.7 7.7 0 0 0 -7.7 -0.4Z" fill="#3a78d4"/>
<path d="M0 0 L0.6 -7.7 A7.7 7.7 0 0 1 7.6 1.2Z" fill="#d8342a"/>
<path d="M0 0 L-7.7 -0.4 A7.7 7.7 0 0 0 -0.6 7.7Z" fill="#38a844"/>
<path d="M0 0 L-0.6 7.7 A7.7 7.7 0 0 0 7.6 1.2Z" fill="#eec02a"/>
<circle cx="0" cy="0" r="7.7" fill="url(#hl)"/>
</g>
</defs>
<g stroke-linecap="round" stroke-linejoin="round">
<!-- zoom to fit -->
<path d="M781.6 142.8 L775.6 148.8" stroke="#4a81a8" stroke-width="3.6"/><path d="M781.6 142.8 L775.8 148.6" stroke="#8fc0de" stroke-width="1.4"/>
<circle cx="785.8" cy="138.4" r="5.8" fill="#eef1f4" stroke="#8a8a8a" stroke-width="1.2"/>
<path d="M785.8 134.4 l-1.3 1.5 h2.6Z M785.8 142.4 l-1.3 -1.5 h2.6Z M781.8 138.4 l1.5 -1.3 v2.6Z M789.8 138.4 l-1.5 -1.3 v2.6Z" fill="#444"/>
<!-- zoom area -->
<rect x="805.4" y="132.4" width="12.6" height="12.2" fill="none" stroke="#555" stroke-width="0.9" stroke-dasharray="2.4 1.6" stroke-linecap="butt"/>
<path d="M805 145.2 L800.8 149.6" stroke="#4a81a8" stroke-width="3.6"/><path d="M805 145.2 L801 149.4" stroke="#8fc0de" stroke-width="1.4"/>
<circle cx="809.3" cy="140.5" r="6.3" fill="#eef1f4" stroke="#8a8a8a" stroke-width="1.2"/>
<!-- previous view -->
<path d="M827.4 144.6 L838.6 134 L842 132.8 L843.6 135.4 L841.6 137.2 L832 149 Q828.6 149.8 827.4 144.6Z" fill="url(#vg)" stroke="#8a8a8a" stroke-width="1"/>
<ellipse cx="829.8" cy="146.6" rx="2.2" ry="1.6" transform="rotate(-42 829.8 146.6)" fill="#fafafa" stroke="#9a9a9a" stroke-width="0.8"/>
<path d="M844 145.4 H839.4 V143.4 L835.6 146.2 L839.4 149 V147 H844Z" fill="#4a94c8" stroke="#2f78ac" stroke-width="0.5"/>
<!-- section view -->
<path d="M852.6 138.6 Q852.8 133.2 861.2 133 Q869.8 133.2 870 138.6 L870 144.4 L865.6 146.4 L865.6 139.8 Q861.2 136.6 857 139.8 L857 149.6 L852.6 147.6Z" fill="url(#vg)" stroke="#7a7a7a" stroke-width="1"/>
<path d="M852.8 138.8 L857 140.4 L857 149.4 L852.8 147.4Z" fill="#6fb4dc" stroke="#2f6f9a" stroke-width="0.8"/>
<path d="M865.6 140 L869.8 138.8 L869.8 144.4 L865.6 146.2Z" fill="#6fb4dc" stroke="#2f6f9a" stroke-width="0.8"/>
<path d="M853 142.6 L856.8 140.8 M853 145.4 L856.8 143.6 M853.4 147.6 L856.8 146.2 M865.8 142.6 L869.6 140.8 M865.8 145 L869.6 143.2" stroke="#2f6f9a" stroke-width="0.7"/>
<path d="M857 139.8 Q861.2 136.6 865.6 139.8 L865.6 146.4 Q861.2 143.6 857 146.6Z" fill="#bdbdbd" stroke="#8a8a8a" stroke-width="0.7"/>
<!-- view orientation -->
<path d="M878.6 136.8 L883.8 132.4 H896.2 V144.8 L891 149.2" fill="none" stroke="#4a4a4a" stroke-width="1"/>
<path d="M891 136.8 L896.2 132.4 M883.8 132.4 V136.8 M896.2 144.8 H891" fill="none" stroke="#4a4a4a" stroke-width="0.9"/>
<rect x="878.6" y="136.8" width="12.4" height="12.4" fill="url(#vb)" stroke="#2f6f9a" stroke-width="1.1"/>
<path d="M887.6 133.2 V135.6 M886.4 134.6 L887.6 135.8 L888.8 134.6 M895.4 140.6 H892.6 M893.6 139.4 L892.4 140.6 L893.6 141.8" stroke="#333" stroke-width="0.8" fill="none"/>
<!-- display style -->
<path d="M919.6 134.6 L928 131.4 L935.8 134 L935.8 146 L927.4 149.8 L919.6 146.4Z" fill="#fbfbfb" stroke="#8a8a8a" stroke-width="1"/>
<path d="M919.6 134.6 L927.4 137.4 L927.4 149.8 L919.6 146.4Z" fill="url(#vb)" stroke="#3f86b4" stroke-width="0.9"/>
<path d="M919.6 134.6 L928 131.4 L935.8 134 L927.4 137.4Z" fill="#d6ecf8" stroke="#8ab4cc" stroke-width="0.8"/>
<path d="M927.4 137.4 L931.4 135.8 L931.4 147.8 L927.4 149.8Z" fill="#9ccae4"/>
<!-- hide/show (eye) -->
<path d="M958.4 141.2 Q967.2 132.4 976.2 141.2 Q967.2 150 958.4 141.2Z" fill="#efefef" stroke="#a4a4a4" stroke-width="1.1"/>
<circle cx="967.2" cy="141" r="4" fill="#8c8c8c"/><circle cx="967.2" cy="141" r="1.9" fill="#4a4a4a"/>
<path d="M967.2 134.2 V148.6" stroke="#7a7a7a" stroke-width="1.1"/>
<path d="M967.4 137 A4 4 0 0 1 967.4 145Z" fill="#c4c4c4"/>
<!-- edit appearance -->
<use href="#ball" x="1005.7" y="138.9"/>
<path d="M1005 150.2 L1006.6 146 L1014.4 138.2 L1017 140.8 L1009.2 148.6Z" fill="#f2dc7a" stroke="#6a6a6a" stroke-width="0.9"/>
<path d="M1013.2 139.4 L1014.4 138.2 Q1016 137 1017.4 138.4 Q1018.2 139.6 1017 140.8 L1015.8 142Z" fill="#e06a6a" stroke="#8a4a4a" stroke-width="0.7"/>
<path d="M1005 150.2 L1006.6 146 L1009.2 148.6Z" fill="#444"/>
<!-- apply scene -->
<rect x="1023.4" y="139" width="18.4" height="11.6" fill="#3e3e3e"/>
<path d="M1025.6 147.6 h3.4 v3 h-3.4Z M1032 147.6 h3.4 v3 h-3.4Z M1038.2 147.6 h3.4 v3 h-3.4Z M1024.6 141 h1.8 v1.8 h-1.8Z M1039 141 h1.8 v1.8 h-1.8Z M1039 144 h1.8 v1.8 h-1.8Z" fill="#f2f2f2"/>
<use href="#ball" x="1032.6" y="138.9"/>
<!-- view settings (monitor) -->
<rect x="1064.6" y="133.5" width="17" height="11.4" fill="url(#vg)" stroke="#5a5a5a" stroke-width="1.2"/>
<path d="M1073 145 V148 M1069.4 148.2 H1076.8" stroke="#5a5a5a" stroke-width="1.4"/>
</g>
</svg>
<div class="dd dg" style="left:903.7px;top:140px"></div>
<div class="dd dg" style="left:943.3px;top:140px"></div>
<div class="dd dg" style="left:983.4px;top:140px"></div>
<div class="dd dg" style="left:1049.5px;top:140px"></div>
<div class="dd dg" style="left:1089.5px;top:140px"></div>
<!-- ===== MDI window controls ===== -->
<svg style="left:1512px;top:132px" width="124" height="18" viewBox="1512 132 124 18">
<g fill="none" stroke="#a2a2a2" stroke-width="1">
<rect x="1515.5" y="135" width="11" height="12.5"/><path d="M1515.5 135 H1526.5" stroke-width="2"/>
<rect x="1541.5" y="135" width="11" height="12.5"/><path d="M1541.5 135 H1552.5" stroke-width="2"/>
<rect x="1592.5" y="138.5" width="8" height="7"/><path d="M1592.5 138.8 H1600.5" stroke-width="1.6"/>
<path d="M1596.5 138 V135.5 H1604.5 V142.5 H1601" /><path d="M1596.5 135.8 H1604.5" stroke-width="1.6"/>
<path d="M1620.4 136.4 L1629.8 145.8 M1629.8 136.4 L1620.4 145.8" stroke-width="1.2"/>
</g>
<path d="M1516.6 141.4 L1519.8 138.4 V144.4Z M1551.6 141.4 L1548.4 138.4 V144.4Z" fill="#a2a2a2"/>
<rect x="1568" y="144" width="10" height="3" fill="#a2a2a2"/>
</svg>
<!-- ===== task pane tabs ===== -->
<div class="a" style="left:1619px;top:202px;width:26px;height:192px;background:#d9d9d9;border:1px solid #a2a2a2;border-right:none"></div>
<div class="a" style="left:1620px;top:203px;width:25px;height:22px;background:#fafafa"></div>
<div class="a tp" style="top:225px"></div><div class="a tp" style="top:249px"></div><div class="a tp" style="top:273px"></div><div class="a tp" style="top:297px"></div><div class="a tp" style="top:321px"></div><div class="a tp" style="top:345px"></div><div class="a tp" style="top:369px"></div>
<svg style="left:1620px;top:203px" width="25" height="191" viewBox="1620 203 25 191">
<g stroke-linejoin="round" stroke-linecap="round">
<!-- home -->
<path d="M1625.8 213.2 V222 H1638 V213.2" fill="#fff" stroke="#303030" stroke-width="1.3"/>
<path d="M1630 222 V216 H1634.4 V222" fill="#fff" stroke="#303030" stroke-width="1.1"/>
<path d="M1624 214.2 L1631.9 206.6 L1639.8 214.2" fill="none" stroke="#1b4668" stroke-width="2.6" stroke-linejoin="miter" stroke-linecap="butt"/>
<path d="M1624.8 213.4 L1631.9 206.5 L1639 213.4" fill="none" stroke="#6fb8e8" stroke-width="1" stroke-linejoin="miter" stroke-linecap="butt"/>
<!-- design library (books) -->
<path d="M1625 232.4 L1628.6 229.4 L1631 231 L1632.6 229 L1635 230.6 L1636.4 228.6 L1638.8 230.4 L1638.8 243 L1630.4 246.2 L1625 243Z" fill="#fdfdfd" stroke="#2c2c2c" stroke-width="1.1"/>
<path d="M1625 232.4 L1630.4 235 V246.2 M1630.4 235 L1633.2 232.6 V245 M1633.2 232.6 L1636 231.4 V244 M1627.6 233.6 V244.4 M1628.6 229.4 L1633.2 232.6 M1632.6 229 L1636 231.4" fill="none" stroke="#2c2c2c" stroke-width="0.9"/>
<!-- file explorer (folder) -->
<path d="M1623 270 V255.8 Q1623 254.6 1624.2 254.6 H1628.4 L1630 256.8 H1636 Q1637.2 256.8 1637.2 258 V260" fill="#c4c4c4" stroke="#4a4a4a" stroke-width="1.1"/>
<path d="M1623 270 L1627.6 260 H1641.6 L1637 270Z" fill="url(#vg)" stroke="#4a4a4a" stroke-width="1.1"/>
<!-- view palette -->
<rect x="1624" y="278.8" width="15.8" height="14.6" rx="1.4" fill="#fcfcfc" stroke="#2c2c2c" stroke-width="1.2"/>
<path d="M1626.2 281.4 H1632.4 V283.4 H1626.2Z M1634.8 281 H1637.6 V283.8 H1634.8Z M1628.2 285.6 H1630.8 V288 H1633 V291.4 H1626 V288 H1628.2Z" fill="#f3c31c" stroke="#a87c08" stroke-width="0.7"/>
<rect x="1635.4" y="286" width="2.4" height="5.6" fill="#bdbdbd" stroke="#777" stroke-width="0.5"/>
<!-- appearances -->
<g transform="translate(1631.9 308.6) scale(1.04)"><use href="#ball"/></g>
<!-- custom properties -->
<rect x="1624" y="325.6" width="16.2" height="16.4" rx="1" fill="#fdfdfd" stroke="#1c4f74" stroke-width="1.2"/>
<rect x="1624" y="325.6" width="16.2" height="3" fill="#62b0e0" stroke="#1c4f74" stroke-width="1.1"/>
<g fill="#3f9ed2" stroke="#1c4f74" stroke-width="0.7"><rect x="1626" y="330.8" width="3.6" height="2"/><rect x="1626" y="334.6" width="3.6" height="2"/><rect x="1626" y="338.4" width="3.6" height="2"/></g>
<path d="M1631.6 331.8H1638.2M1631.6 335.6H1638.2M1631.6 339.4H1638.2" stroke="#222" stroke-width="1.1"/>
<!-- forum -->
<path d="M1623.8 351.6 H1634.2 V360 H1629 L1626.2 362.8 V360 H1623.8Z" fill="#5aaade" stroke="#1c5e8e" stroke-width="1"/>
<path d="M1631 356.2 H1640.2 V363.2 H1638.6 V365.6 L1635.8 363.2 H1631Z" fill="#f6f6f6" stroke="#4a4a4a" stroke-width="1"/>
<!-- 3DEXPERIENCE -->
<circle cx="1631.9" cy="381.5" r="9.2" fill="#0f4c7a"/>
<circle cx="1631.9" cy="381.5" r="5.2" fill="#1f6fa6"/>
<circle cx="1631.9" cy="381.5" r="9.2" fill="none" stroke="#0a3558" stroke-width="0.8"/>
<path d="M1630.4 378.8 L1634.8 381.5 L1630.4 384.2Z" fill="none" stroke="#9fd0ee" stroke-width="0.9"/>
<path d="M1626 376.4 Q1631.9 371.8 1637.8 376.4" fill="none" stroke="#4a94c8" stroke-width="1.2"/>
</g>
</svg>

<!-- ===== bottom tabs / status bar ===== -->
<div class="a" style="left:2px;top:998px;width:228px;height:1px;background:#cfcfcf"></div>
<div class="a" style="left:28px;top:1000px;width:65px;height:15px;background:#a9a9a9;border-top:1px solid #4a4a4a"></div>
<div class="a" style="left:43.5px;top:1001px;width:1px;height:14px;background:#c2c2c2"></div>
<div class="a" style="left:59.5px;top:1001px;width:1px;height:14px;background:#c2c2c2"></div>
<div class="a" style="left:75.5px;top:1001px;width:1px;height:14px;background:#c2c2c2"></div>
<div class="a" style="left:92px;top:1001px;width:1px;height:14px;background:#c2c2c2"></div>
<svg style="left:28px;top:1001px" width="65" height="14" viewBox="28 1001 65 14">
<g fill="#8a8a8a">
<rect x="32" y="1004" width="1.6" height="8"/><path d="M40 1004 L34.4 1008 L40 1012Z"/>
<path d="M54 1004 L48.4 1008 L54 1012Z"/>
<path d="M65.6 1004 L71.2 1008 L65.6 1012Z"/>
<path d="M80 1004 L85.6 1008 L80 1012Z"/><rect x="86.4" y="1004" width="1.6" height="8"/>
</g></svg>
<div class="a" style="left:93px;top:1000px;width:46px;height:15px;background:#fbfbfb"></div>
<div class="a" style="left:139px;top:1000px;width:101px;height:15px;background:#d2d2d2;border-right:1px solid #a6a6a6;border-left:1px solid #b8b8b8"></div>
<div class="a" style="left:1643px;top:1000px;width:1px;height:15px;background:#b4b4b4"></div>
<!-- status bar separators -->
<div class="a" style="left:1316px;top:1017px;width:1px;height:16px;background:#f6f6f6"></div>
<div class="a" style="left:1320px;top:1017px;width:1px;height:16px;background:#f6f6f6"></div>
<div class="a" style="left:1409px;top:1017px;width:1px;height:16px;background:#f6f6f6"></div>
<div class="a" style="left:1425px;top:1017px;width:1px;height:16px;background:#f6f6f6"></div>
<div class="a" style="left:1534px;top:1023px;width:0;height:0;border-left:3.5px solid transparent;border-right:3.5px solid transparent;border-bottom:4px solid #222"></div>
<svg style="left:1606px;top:1017px" width="38" height="17" viewBox="1606 1017 38 17">
<g stroke-linejoin="round">
<path d="M1607.6 1020.4 L1612 1019.2 L1622.6 1023.6 L1622.6 1027.6 L1616.6 1032.4 L1607.2 1027.8Z" fill="#f6f6f6" stroke="#2a2a2a" stroke-width="1.1"/>
<path d="M1607.4 1025.2 L1616.6 1029.6 L1622.6 1024.4 M1616.6 1029.6 V1032.2" fill="none" stroke="#2a2a2a" stroke-width="0.9"/>
<ellipse cx="1612.6" cy="1022.6" rx="2.2" ry="1.7" fill="#e0e0e0" stroke="#2a2a2a" stroke-width="0.9"/>
<path d="M1615.2 1026 L1617.2 1023.6" stroke="#2a2a2a" stroke-width="1.3"/>
</g>
<g fill="#b0b0b0"><rect x="1641" y="1024" width="2" height="2"/><rect x="1638" y="1027" width="2" height="2"/><rect x="1641" y="1027" width="2" height="2"/><rect x="1635" y="1030" width="2" height="2"/><rect x="1638" y="1030" width="2" height="2"/><rect x="1641" y="1030" width="2" height="2"/></g>
</svg>

<!-- ===== text labels ===== -->
<div class="t" style="left:183.5px;top:16.5px;letter-spacing:0.10px;width:46.4px;"><b>ﾌｧｲﾙ</b>(F)</div>
<div class="t" style="left:243.8px;top:16.5px;letter-spacing:0.30px;width:43.7px;">編集(E)</div>
<div class="t" style="left:300.5px;top:16.5px;letter-spacing:0.62px;width:45.0px;">表示(V)</div>
<div class="t" style="left:358.5px;top:16.5px;letter-spacing:0.69px;width:40.6px;">挿入(I)</div>
<div class="t" style="left:412.0px;top:16.5px;letter-spacing:1.13px;width:44.5px;"><b>ﾂｰﾙ</b>(T)</div>
<div class="t" style="left:468.5px;top:16.5px;letter-spacing:0.33px;width:62.8px;"><b>ｳｨﾝﾄ<i>ﾞ</i>ｳ</b>(W)</div>
<div class="t" style="left:544.3px;top:16.5px;letter-spacing:0.29px;width:45.2px;"><b>ﾍﾙﾌ<i>ﾟ</i></b>(H)</div>
<div class="t" style="left:1073.2px;top:16.9px;transform:scaleX(0.8);transform-origin:0 0;letter-spacing:-0.23px;width:85.7px;">サンプルモデル</div>
<div class="t" style="left:1140.6px;top:16.9px;letter-spacing:-0.21px;width:59.1px;">.SLDPRT *</div>
<div class="t" style="left:1296.5px;top:16.0px;font-size:11px;letter-spacing:-0.24px;color:#585858;width:101.4px;"><b>ｺﾐｭﾆﾃｨ</b> <b>ﾌｫｰﾗﾑ</b>検索</div>
<div class="t" style="left:15.7px;top:76.7px;letter-spacing:-1.60px;width:44.4px;">押し出し</div>
<div class="t" style="left:11.7px;top:90.7px;letter-spacing:0.65px;width:52.0px;"><b>ﾎ<i>ﾞ</i>ｽ</b>/<b>ﾍ<i>ﾞ</i>ｰｽ</b></div>
<div class="t" style="left:84.6px;top:76.7px;width:26.5px;">回転</div>
<div class="t" style="left:71.7px;top:90.7px;letter-spacing:0.66px;width:52.1px;"><b>ﾎ<i>ﾞ</i>ｽ</b>/<b>ﾍ<i>ﾞ</i>ｰｽ</b></div>
<div class="t" style="left:154.9px;top:50.7px;letter-spacing:0.47px;width:35.7px;"><b>ｽｲｰﾌ<i>ﾟ</i></b></div>
<div class="t" style="left:154.9px;top:77.2px;letter-spacing:-0.85px;width:21.8px;"><b>ﾛﾌﾄ</b></div>
<div class="t" style="left:154.9px;top:103.0px;letter-spacing:0.48px;width:75.8px;">境界<b>ﾎ<i>ﾞ</i>ｽ</b>/<b>ﾍ<i>ﾞ</i>ｰｽ</b></div>
<div class="t" style="left:247.0px;top:77.0px;letter-spacing:-1.60px;width:42.9px;">押し出し</div>
<div class="t" style="left:257.7px;top:90.5px;letter-spacing:-1.05px;width:21.4px;"><b>ｶｯﾄ</b></div>
<div class="t" style="left:313.5px;top:69.5px;width:12.7px;">穴</div>
<div class="t" style="left:298.8px;top:83.3px;letter-spacing:-0.02px;width:44.0px;"><b>ｳｨｻ<i>ﾞ</i>ｰﾄ<i>ﾞ</i></b></div>
<div class="t" style="left:350.0px;top:77.0px;letter-spacing:-0.75px;width:44.5px;">回転<b>ｶｯﾄ</b></div>
<div class="t" style="left:426.0px;top:50.7px;letter-spacing:-0.08px;width:57.5px;"><b>ｽｲｰﾌ<i>ﾟ</i></b> <b>ｶｯﾄ</b></div>
<div class="t" style="left:426.0px;top:77.2px;letter-spacing:-0.56px;width:44.5px;"><b>ﾛﾌﾄ</b> <b>ｶｯﾄ</b></div>
<div class="t" style="left:426.0px;top:103.0px;letter-spacing:-0.75px;width:44.5px;">境界<b>ｶｯﾄ</b></div>
<div class="t" style="left:500.0px;top:70.5px;letter-spacing:-1.25px;width:32.5px;"><b>ﾌｨﾚｯﾄ</b></div>
<div class="t" style="left:544.7px;top:70.0px;letter-spacing:-0.70px;width:25.8px;">直線</div>
<div class="t" style="left:541.0px;top:83.8px;letter-spacing:0.02px;width:33.9px;"><b>ﾊ<i>ﾟ</i>ﾀｰﾝ</b></div>
<div class="t" style="left:605.2px;top:50.7px;letter-spacing:-1.60px;width:16.3px;"><b>ﾘﾌ<i>ﾞ</i></b></div>
<div class="t" style="left:606.2px;top:77.2px;letter-spacing:-1.50px;width:46.0px;">抜き勾配</div>
<div class="t" style="left:606.0px;top:103.0px;letter-spacing:-0.70px;width:22.1px;"><b>ｼｪﾙ</b></div>
<div class="t" style="left:689.0px;top:50.7px;letter-spacing:-0.30px;width:25.9px;"><b>ﾗｯﾌ<i>ﾟ</i></b></div>
<div class="t" style="left:689.0px;top:77.2px;letter-spacing:-0.60px;width:25.9px;">交差</div>
<div class="t" style="left:689.0px;top:103.0px;letter-spacing:-1.00px;width:21.5px;"><b>ﾐﾗｰ</b></div>
<div class="t" style="left:737.5px;top:70.5px;letter-spacing:-1.60px;width:24.4px;">参照</div>
<div class="t" style="left:731.0px;top:83.8px;letter-spacing:-0.82px;width:36.7px;"><b>ｼ<i>ﾞ</i>ｵﾒﾄﾘ</b></div>
<div class="t" style="left:776.9px;top:70.5px;letter-spacing:0.16px;width:27.3px;"><b>ｶｰﾌ<i>ﾞ</i></b></div>
<div class="t" style="left:815.5px;top:76.5px;letter-spacing:0.14px;width:55.0px;">Instant3D</div>
<div class="t" style="left:881.9px;top:77.5px;letter-spacing:-0.98px;width:39.6px;"><b>ｴﾝﾃｨﾃｨ</b></div>
<div class="t" style="left:887.7px;top:91.0px;letter-spacing:-1.07px;width:27.3px;"><b>ﾁｪｯｸ</b></div>
<div class="t" style="left:8.7px;top:128.5px;letter-spacing:-0.30px;width:43.0px;"><b>ﾌｨｰﾁｬｰ</b></div>
<div class="t" style="left:71.4px;top:128.5px;letter-spacing:-0.03px;width:30.4px;"><b>ｽｹｯﾁ</b></div>
<div class="t" style="left:121.7px;top:128.5px;letter-spacing:-0.20px;width:49.9px;">直接編集</div>
<div class="t" style="left:193.5px;top:128.5px;letter-spacing:-0.30px;width:26.2px;">評価</div>
<div class="t" style="left:241.8px;top:128.5px;letter-spacing:-0.32px;width:85.4px;">MBD Dimension</div>
<div class="t" style="left:341.4px;top:128.5px;letter-spacing:-0.43px;width:112.1px;">SOLIDWORKS <b>ｱﾄ<i>ﾞ</i>ｲﾝ</b></div>
<div class="t" style="left:465.4px;top:128.5px;letter-spacing:0.31px;width:89.2px;"><b>ｱﾉﾃｰﾄ</b> <b>ｱｲﾃﾑ</b>(N)</div>
<div class="t" style="left:28.1px;top:227.5px;transform:scaleX(0.8);transform-origin:0 0;letter-spacing:-0.48px;width:84.2px;">サンプルモデル</div>
<div class="t" style="left:100.5px;top:227.5px;font-size:11px;letter-spacing:-0.04px;color:#303030;width:128.5px;">(<b>ﾃ<i>ﾞ</i>ﾌｫﾙﾄ</b>&lt;&lt;<b>ﾃ<i>ﾞ</i>ﾌｫﾙﾄ</b>&gt;_表示</div>
<div class="t" style="left:51.5px;top:249.7px;letter-spacing:-0.90px;width:25.6px;">履歴</div>
<div class="t" style="left:51.5px;top:271.7px;font-size:11px;letter-spacing:-1.60px;color:#303030;width:25.6px;"><b>ｾﾝｻｰ</b></div>
<div class="t" style="left:51.5px;top:293.7px;font-size:11px;letter-spacing:-1.06px;color:#303030;width:59.0px;"><b>ｱﾉﾃｰﾄ</b> <b>ｱｲﾃﾑ</b></div>
<div class="t" style="left:51.5px;top:315.7px;font-size:11px;letter-spacing:-0.04px;color:#303030;width:78.4px;"><b>ｿﾘｯﾄ<i>ﾞ</i></b> <b>ﾎ<i>ﾞ</i>ﾃ<i>ﾞ</i>ｨ</b>(1)</div>
<div class="t" style="left:51.5px;top:337.7px;letter-spacing:-0.73px;width:86.0px;">材料 &lt;指定なし&gt;</div>
<div class="t" style="left:51.5px;top:359.7px;letter-spacing:-0.90px;width:25.6px;">正面</div>
<div class="t" style="left:51.5px;top:381.7px;letter-spacing:-0.90px;width:25.6px;">平面</div>
<div class="t" style="left:51.5px;top:403.7px;letter-spacing:-0.40px;width:37.7px;">右側面</div>
<div class="t" style="left:51.5px;top:425.7px;letter-spacing:-0.90px;width:25.6px;">原点</div>
<div class="t" style="left:51.5px;top:447.7px;letter-spacing:-0.93px;width:75.9px;"><b>ﾎ<i>ﾞ</i>ｽ</b> - 押し出し1</div>
<div class="t" style="left:242.0px;top:983.0px;font-size:13px;letter-spacing:2.23px;color:#000;font-weight:bold;width:83.7px;">*不等角投影</div>
<div class="t" style="left:104.5px;top:999.5px;width:26.8px;"><b>ﾓﾃ<i>ﾞ</i>ﾙ</b></div>
<div class="t" style="left:146.5px;top:999.5px;letter-spacing:-0.21px;width:79.6px;"><b>ﾓｰｼｮﾝ</b> <b>ｽﾀﾃ<i>ﾞ</i>ｨ</b> 1</div>
<div class="t" style="left:2.4px;top:1017.5px;letter-spacing:-0.67px;width:182.4px;">SOLIDWORKS Premium 2019 SP5.0</div>
<div class="t" style="left:1328.6px;top:1017.5px;letter-spacing:1.12px;width:75.9px;">編集中: 部品</div>
<div class="t" style="left:1469.6px;top:1017.5px;letter-spacing:-0.71px;width:37.7px;">MMGS</div>
<div class="a" id="bl2"></div>
<div class="a" id="br2"></div>
<div class="a" id="bt"></div>
<div class="a" id="bl"></div>
<div class="a" id="br"></div>
<div class="a" id="bb"></div>
</body>
</html>
